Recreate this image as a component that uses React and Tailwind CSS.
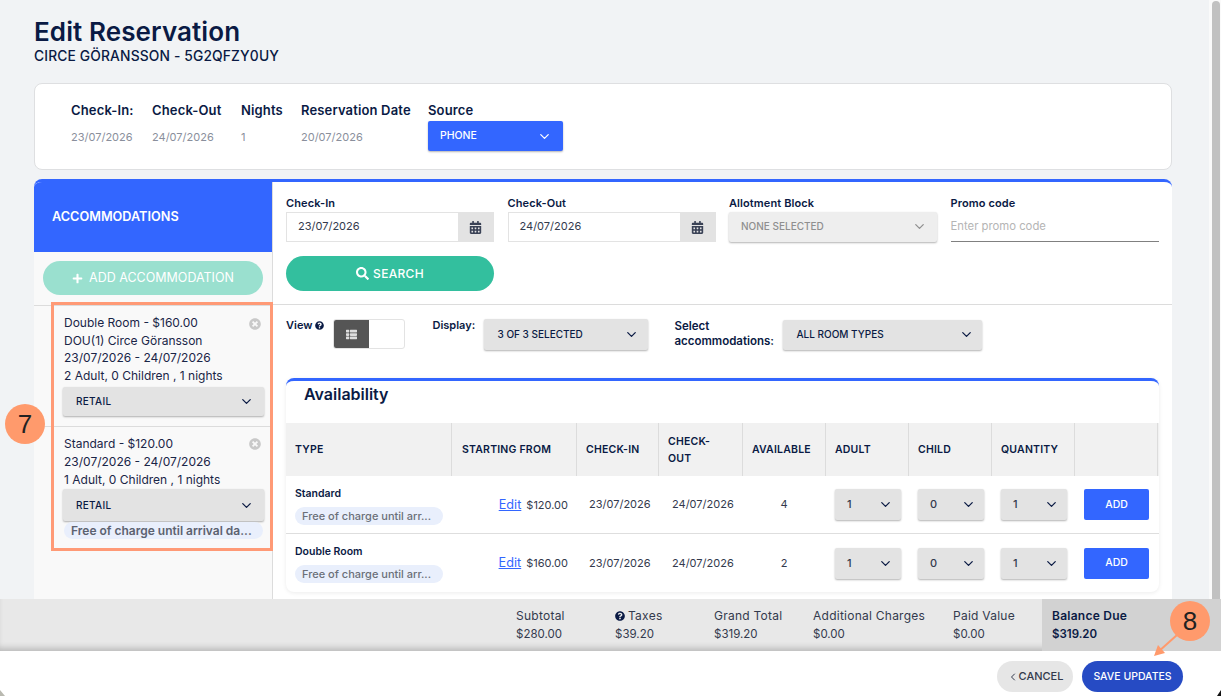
import { ChevronDown, ChevronLeft } from 'lucide-react'
import { FaCalendarAlt, FaPlus, FaQuestionCircle, FaSearch, FaThList, FaTimesCircle } from 'react-icons/fa'

const COLS = 'grid grid-cols-[166px_125px_82px_84px_83px_83px_83px_83px_83px]'

function Select({ label, className = '', text = 'text-[#0a1a44]', chevron = 'text-[#0a1a44]' }) {
  return (
    <div className={`flex items-center justify-between rounded-[2px] shadow-[0_1px_2px_rgba(0,0,0,0.3)] ${className}`}>
      <span className={`font-medium ${text}`}>{label}</span>
      <ChevronDown size={15} strokeWidth={2} className={chevron} />
    </div>
  )
}

function DateInput({ label, value }) {
  return (
    <div>
      <div className="mb-[1px] text-[11px] leading-[16px] font-semibold tracking-[0.1px] text-[#0a1a44]">{label}</div>
      <div className="flex h-[30px] w-[208px] border border-[#e3e3e3] bg-white">
        <div className="flex flex-1 items-center pb-[1px] pl-[11px] text-[11px] text-[#333a4d]">{value}</div>
        <div className="flex w-[35px] items-center justify-center bg-[#e3e3e3] text-[#3a4256]">
          <FaCalendarAlt size={13} />
        </div>
      </div>
    </div>
  )
}

function Booking({ lines, note, first }) {
  return (
    <div className={`relative pl-[29px] ${first ? 'border-b border-[#dcdcdc]' : ''} pt-[8px]`}>
      <div className="ml-[1px] text-[12px] leading-[17.6px] text-[#1a2547]">
        {lines.map((l) => (
          <div key={l}>{l}</div>
        ))}
      </div>
      <FaTimesCircle size={12} className={`absolute right-[11px] text-[#c9c9c9] ${first ? 'top-[12px]' : 'top-[11px]'}`} />
      {first ? (
        <>
          <Select label="RETAIL" className="mt-[3px] h-[29px] w-[201px] bg-[#e3e3e3] pr-[10px] pl-[13px] text-[10px] tracking-[0.3px]" />
          <div className="h-[10px]" />
        </>
      ) : (
        <Select label="RETAIL" className="mt-[1px] h-[32px] w-[201px] bg-[#e3e3e3] pr-[10px] pl-[13px] text-[10px] tracking-[0.3px]" />
      )}
      {note && (
        <div className="mt-[1px] ml-[1px] w-[199px] truncate rounded-full bg-[#e9effc] px-[7px] text-[12px] leading-[17px] font-semibold text-[#5c6270]">
          Free of charge until arrival da...
        </div>
      )}
    </div>
  )
}

function Row({ name, price, available, last }) {
  return (
    <div className={`${COLS} h-[58px] items-center ${last ? '' : 'border-b border-[#dedede]'} text-[11px] text-[#333a4d]`}>
      <div className="pt-[2px] pl-[9px]">
        <div className="text-[10.5px] leading-[14px] font-semibold text-[#0a1a44]">{name}</div>
        <div className="mt-[6px] w-[148px] rounded-full bg-[#e9effc] px-[7px] text-[11px] leading-[18px] font-medium text-[#6b7079]">
          Free of charge until arr...
        </div>
      </div>
      <div className="flex justify-end gap-[5px] pr-[9px]">
        <span className="text-[12.7px] leading-[16px] text-[#3366ff] underline">Edit</span>
        <span className="leading-[16px]">{price}</span>
      </div>
      <div className="pl-[12px]">23/07/2026</div>
      <div className="pl-[13px]">24/07/2026</div>
      <div className="pr-[1px] text-center">{available}</div>
      {['1', '0', '1'].map((v, i) => (
        <div key={i} className="pl-[9px]">
          <Select label={v} className="h-[31px] w-[66px] bg-[#e3e3e3] pr-[8px] pl-[12px] text-[11px]" text="text-[#333a4d]" />
        </div>
      ))}
      <div className="pl-[9px]">
        <div className="flex h-[31px] w-[65px] items-center justify-center rounded-[2px] bg-[#3366ff] text-[10.5px] font-medium text-white">ADD</div>
      </div>
    </div>
  )
}

function Total({ label, value, className = '', icon }) {
  return (
    <div className={className}>
      <div className="flex items-center gap-[3px] text-[12px] tracking-[0.25px]">
        {icon && <FaQuestionCircle size={10} className="text-[#0a1a44]" />}
        {label}
      </div>
      <div className="mt-[4px]">{value}</div>
    </div>
  )
}

export default function App() {
  return (
    <div className="relative flex h-[696px] w-[1221px] flex-col overflow-hidden bg-[#f1f3f5] font-['Inter',sans-serif]">
      <div className="flex min-h-0 flex-1">
        <div className="w-[1209px] pt-[15px] pl-[34px]">
          <h1 className="text-[26px] leading-[33px] font-semibold tracking-[0.1px] text-[#0a1a44]">Edit Reservation</h1>
          <div className="text-[13.8px] leading-[16px] font-medium tracking-[0.15px] text-[#0a1a44]">CIRCE GÖRANSSON - 5G2QFZY0UY</div>

          <div className="mt-[19px] flex h-[87px] w-[1138px] gap-[18px] rounded-[8px] border border-[#dedfe1] bg-white pt-[18px] pl-[36px]">
            {[
              ['Check-In:', '23/07/2026', 'w-[63px]'],
              ['Check-Out', '24/07/2026', 'w-[71px]'],
              ['Nights', '1', 'w-[42px]'],
              ['Reservation Date', '20/07/2026', 'w-[109px]'],
            ].map(([label, value, width]) => (
              <div key={label} className={width}>
                <div className="whitespace-nowrap text-[13px] leading-[17px] font-semibold tracking-[0.15px] text-[#0a1a44]">{label}</div>
                <div className="mt-[10px] text-[11px] leading-[16px] text-[#8a8f9c]">{value}</div>
              </div>
            ))}
            <div>
              <div className="text-[13px] leading-[17px] font-semibold tracking-[0.15px] text-[#0a1a44]">Source</div>
              <Select label="PHONE" className="mt-[2px] h-[30px] w-[135px] bg-[#3366ff] pr-[11px] pl-[12px] text-[10.5px]" text="text-white" chevron="text-white" />
            </div>
          </div>

          <div className="mt-[9px] flex h-[420px] w-[1138px] overflow-hidden rounded-t-[8px] border-t-[3px] border-[#3366ff] bg-white">
            <div className="w-[239px] shrink-0 border-r border-[#dcdcdc] bg-[#f9f9f9]">
              <div className="-mt-[3px] flex h-[73px] items-center bg-[#3366ff] pt-[3px] pl-[18px] text-[12.7px] font-semibold text-white">ACCOMMODATIONS</div>
              <div className="border-b border-[#dcdcdc] px-[9px] pt-[9px] pb-[10px]">
                <div className="flex h-[34px] items-center justify-center gap-[6px] rounded-full bg-[#9ae0cf] text-[12.5px] text-white">
                  <FaPlus size={11} />
                  ADD ACCOMMODATION
                </div>
              </div>
              <Booking first lines={['Double Room - $160.00', 'DOU(1) Circe Göransson', '23/07/2026 - 24/07/2026', '2 Adult, 0 Children , 1 nights']} />
              <Booking note lines={['Standard - $120.00', '23/07/2026 - 24/07/2026', '1 Adult, 0 Children , 1 nights']} />
            </div>

            <div className="min-w-0 flex-1">
              <div className="h-[123px] border-b border-[#dcdcdc] pt-[13px] pl-[13px]">
                <div className="flex gap-[13.5px]">
                  <DateInput label="Check-In" value="23/07/2026" />
                  <DateInput label="Check-Out" value="24/07/2026" />
                  <div>
                    <div className="mb-[1px] text-[11px] leading-[16px] font-semibold tracking-[0.1px] text-[#0a1a44]">Allotment Block</div>
                    <Select label="NONE SELECTED" className="h-[30px] w-[208px] bg-[#eeeeee] pr-[10px] pb-[1px] pl-[12px] text-[10px]" text="text-[#8f8f8f]" chevron="text-[#8f8f8f]" />
                  </div>
                  <div>
                    <div className="mb-[1px] text-[11px] leading-[16px] font-semibold tracking-[0.1px] text-[#0a1a44]">Promo code</div>
                    <div className="flex h-[30px] w-[208px] items-center border-b border-[#808080] text-[11.3px] text-[#b5b5b5]">Enter promo code</div>
                  </div>
                </div>
                <div className="mt-[14px] flex h-[35px] w-[208px] items-center justify-center gap-[4px] rounded-full bg-[#33bf9e] text-[12px] font-medium tracking-[0.3px] text-white">
                  <FaSearch size={13} />
                  SEARCH
                </div>
              </div>

              <div className="flex h-[73px] pt-[14px] pl-[13px]">
                <div className="flex items-start gap-[3px] text-[11px] leading-[13px] font-semibold text-[#0a1a44]">
                  View <FaQuestionCircle size={9} className="mt-[2px]" />
                </div>
                <div className="ml-[9px] flex h-[30px] w-[72px] overflow-hidden rounded-[3px] border border-[#e3e3e3]">
                  <div className="flex w-[35px] items-center justify-center bg-[#555555] text-[#dddddd]">
                    <FaThList size={11} />
                  </div>
                </div>
                <div className="ml-[27px] w-[44px] text-[11px] leading-[13px] font-semibold text-[#0a1a44]">Display:</div>
                <Select label="3 OF 3 SELECTED" className="ml-[8px] h-[31px] w-[164px] bg-[#e3e3e3] pr-[9px] pl-[13px] text-[10px]" />
                <div className="ml-[26px] w-[101px] text-[11.5px] leading-[15px] font-semibold text-[#0a1a44]">
                  Select<br />accommodations:
                </div>
                <Select label="ALL ROOM TYPES" className="mt-[1px] ml-[8px] h-[30px] w-[199px] bg-[#e3e3e3] pr-[8px] pb-[1px] pl-[13px] text-[10px]" />
              </div>

              <div className="ml-[13px] h-[214px] w-[873px] overflow-hidden rounded-[8px] border-t-[3px] border-[#3366ff] bg-white shadow-[0_1px_4px_rgba(0,0,0,0.08)]">
                <div className="h-[42px] pt-[1px] pl-[18px] text-[16px] leading-[24px] font-semibold text-[#0a1a44]">Availability</div>
                <div className={`${COLS} h-[53px] items-center bg-[#f1f1f1] text-[10.5px] font-semibold tracking-[0.2px] text-[#0a1a44]`}>
                  <div className="flex h-full items-center border-r border-[#dcdcdc] pl-[9px]">TYPE</div>
                  <div className="flex h-full items-center border-r border-[#dcdcdc] pl-[10px]">STARTING FROM</div>
                  <div className="flex h-full items-center border-r border-[#dcdcdc] pl-[9px]">CHECK-IN</div>
                  <div className="flex h-full items-center border-r border-[#dcdcdc] pl-[9px] leading-[17px]">CHECK-<br />OUT</div>
                  <div className="flex h-full items-center border-r border-[#dcdcdc] pl-[9px]">AVAILABLE</div>
                  <div className="flex h-full items-center border-r border-[#dcdcdc] pl-[9px]">ADULT</div>
                  <div className="flex h-full items-center border-r border-[#dcdcdc] pl-[9px]">CHILD</div>
                  <div className="flex h-full items-center border-r border-[#dcdcdc] pl-[9px]">QUANTITY</div>
                  <div className="h-full border-r border-[#dcdcdc]" />
                </div>
                <Row name="Standard" price="$120.00" available="4" />
                <Row name="Double Room" price="$160.00" available="2" last />
              </div>
            </div>
          </div>
        </div>
        {/* scrollbar track and thumb */}
        <div className="w-[12px] shrink-0 bg-[#fafafa] pt-[1px] pr-[1px] pl-[3px]">
          <div className="h-full rounded-t-full bg-[#c1c1c1]" />
        </div>
      </div>

      <div className="flex h-[52px] shrink-0 justify-end bg-[#e8e8e8] text-[11.5px] leading-[15px] text-[#333a4d] shadow-[inset_0_-6px_6px_-3px_rgba(0,0,0,0.2)]">
        <Total label="Subtotal" value="$280.00" className="w-[99px] pt-[9px]" />
        <Total icon label="Taxes" value="$39.20" className="w-[99px] pt-[9px]" />
        <Total label="Grand Total" value="$319.20" className="w-[99px] pt-[9px]" />
        <Total label="Additional Charges" value="$0.00" className="w-[140px] pt-[9px]" />
        <Total label="Paid Value" value="$0.00" className="w-[89px] pt-[9px]" />
        <Total label="Balance Due" value="$319.20" className="w-[179px] bg-[#d2d2d2] pt-[9px] pl-[10px] font-semibold text-[#0a1a44]" />
      </div>

      <div className="flex h-[45px] shrink-0 items-start justify-end gap-[9px] bg-white pt-[10px] pr-[38px]">
        <div className="flex h-[31px] w-[76px] items-center justify-center rounded-full bg-[#e6e6e6] text-[11px] font-medium text-[#333a4d]">
          <ChevronLeft size={12} />CANCEL
        </div>
        <div className="flex h-[31px] w-[101px] items-center justify-center rounded-full bg-[#264bc4] text-[10.5px] font-medium text-white">SAVE UPDATES</div>
      </div>

      <div className="absolute top-[302px] left-[51px] h-[249px] w-[222px] border-[3px] border-[#ff9a76]" />
      <div className="absolute top-[404px] left-[5px] flex h-[40px] w-[40px] items-center justify-center rounded-full bg-[#ff9a6c] font-['Liberation_Sans',sans-serif] text-[26px] text-[#222]">7</div>
      <div className="absolute top-[601px] left-[1170px] flex h-[40px] w-[40px] items-center justify-center rounded-full bg-[#ff9a6c] font-['Liberation_Sans',sans-serif] text-[26px] text-[#222]">8</div>
      <svg className="absolute top-[630px] left-[1150px]" width="34" height="30" viewBox="0 0 34 30" fill="none">
        <path d="M27 5 L8 22" stroke="#ff9a6c" strokeWidth="2" />
        <path d="M4 26 L15 23 L8 15 Z" fill="#ff9a6c" />
      </svg>
      {/* window corners */}
      <svg className="absolute bottom-0 left-0" width="5" height="6" viewBox="0 0 5 6">
        <path d="M0 0 L5 6 L0 6 Z" fill="#b9b9b0" />
      </svg>
      <svg className="absolute right-0 bottom-0" width="4" height="6" viewBox="0 0 4 6">
        <path d="M4 0 L4 6 L0 6 Z" fill="#111111" />
      </svg>
    </div>
  )
}
